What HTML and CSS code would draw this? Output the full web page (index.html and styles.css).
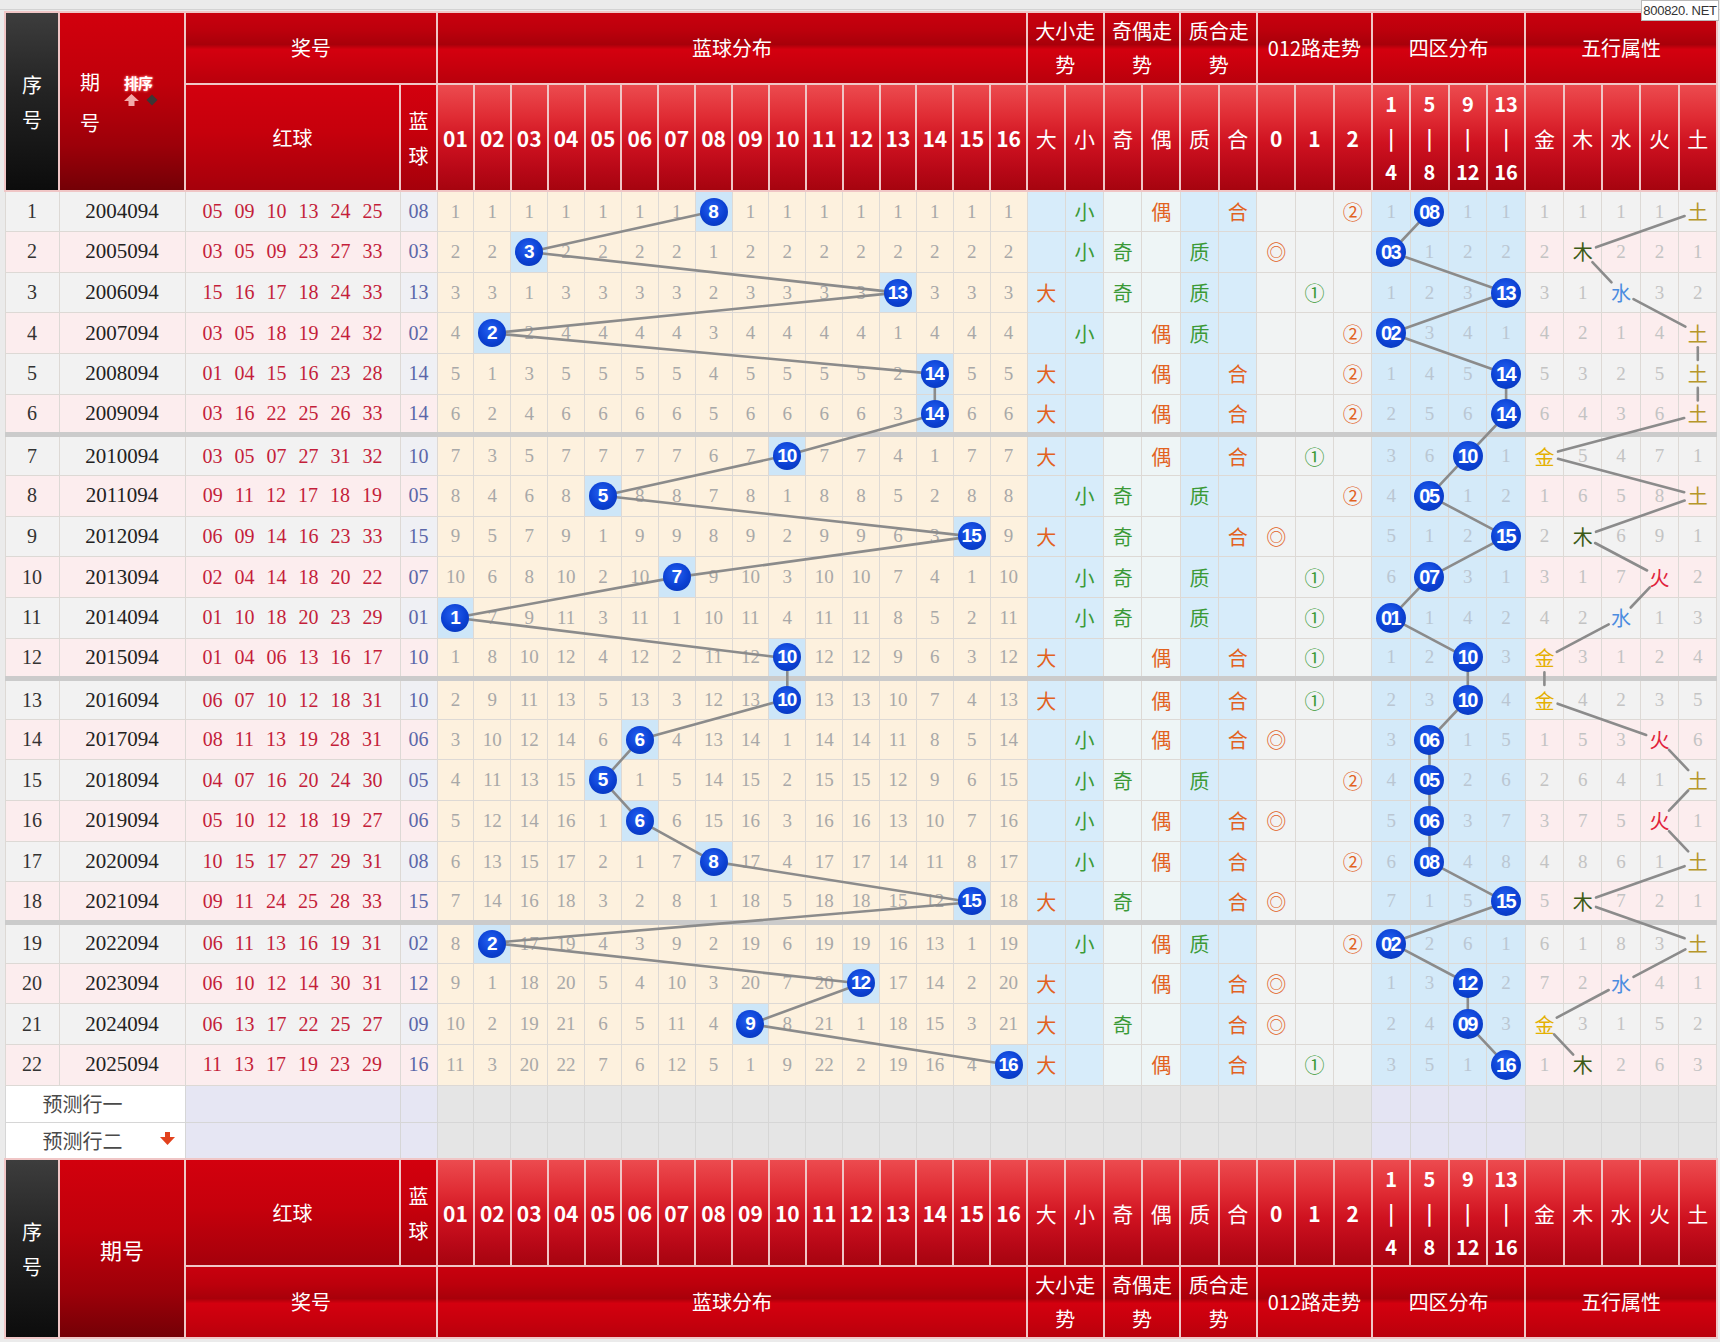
FILE: index.html
```html
<!DOCTYPE html>
<html lang="zh-CN">
<head>
<meta charset="utf-8">
<title>双色球蓝球走势图</title>
<link rel="stylesheet" href="styles.css">
</head>
<body>
<div class="site">800820. NET</div>
<div class="chart">
<svg class="lines" xmlns="http://www.w3.org/2000/svg"></svg>
<table class="grid">
<colgroup>
<col class="c-xh"><col class="c-qh"><col class="c-hq"><col class="c-lq">
<col class="c-n"><col class="c-n"><col class="c-n"><col class="c-n"><col class="c-n"><col class="c-n"><col class="c-n"><col class="c-n"><col class="c-n"><col class="c-n"><col class="c-n"><col class="c-n"><col class="c-n"><col class="c-n"><col class="c-n"><col class="c-n">
<col class="c-m"><col class="c-m"><col class="c-m"><col class="c-m"><col class="c-m"><col class="c-m"><col class="c-m"><col class="c-m"><col class="c-m"><col class="c-m"><col class="c-m"><col class="c-m"><col class="c-m"><col class="c-m"><col class="c-m"><col class="c-m"><col class="c-m"><col class="c-m">
</colgroup>
<thead>
<tr class="h1">
<th rowspan="2" class="xh"><span class="stk">序<br>号</span></th>
<th rowspan="2" class="qhh"><div class="qhw"><span class="stk wide">期<br>号</span><span class="sort"><b>排序</b><svg width="36" height="12" viewBox="0 0 36 12"><polygon points="7.5,0 15,7 10.5,7 10.5,12 4.5,12 4.5,7 0,7" fill="#f3a9a9"/><polygon points="28,0.5 33.5,6 28,11.5 22.5,6" fill="#3d3535"/></svg></span></div></th>
<th colspan="2" class="g1">奖号</th>
<th colspan="16" class="g1">蓝球分布</th>
<th colspan="2" class="g1 two">大小走势</th>
<th colspan="2" class="g1 two">奇偶走势</th>
<th colspan="2" class="g1 two">质合走势</th>
<th colspan="3" class="g1">012路走势</th>
<th colspan="4" class="g1">四区分布</th>
<th colspan="5" class="g1">五行属性</th>
</tr>
<tr class="h2">
<th class="rd">红球</th><th class="rd"><span class="stk">蓝<br>球</span></th>
<th class="nm">01</th><th class="nm">02</th><th class="nm">03</th><th class="nm">04</th><th class="nm">05</th><th class="nm">06</th><th class="nm">07</th><th class="nm">08</th><th class="nm">09</th><th class="nm">10</th><th class="nm">11</th><th class="nm">12</th><th class="nm">13</th><th class="nm">14</th><th class="nm">15</th><th class="nm">16</th>
<th class="nm cj">大</th><th class="nm cj">小</th><th class="nm cj">奇</th><th class="nm cj">偶</th><th class="nm cj">质</th><th class="nm cj">合</th>
<th class="nm">0</th><th class="nm">1</th><th class="nm">2</th>
<th class="nm zq">1<br>|<br>4</th><th class="nm zq">5<br>|<br>8</th><th class="nm zq">9<br>|<br>12</th><th class="nm zq">13<br>|<br>16</th>
<th class="nm cj">金</th><th class="nm cj">木</th><th class="nm cj">水</th><th class="nm cj">火</th><th class="nm cj">土</th>
</tr>
</thead>
<tbody>
<tr class="r a"><td>1</td><td>2004094</td><td>05 09 10 13 24 25</td><td>08</td><td>1</td><td>1</td><td>1</td><td>1</td><td>1</td><td>1</td><td>1</td><td class="on"><i class="ball bd">8</i></td><td>1</td><td>1</td><td>1</td><td>1</td><td>1</td><td>1</td><td>1</td><td>1</td><td></td><td><span class="g">小</span></td><td></td><td><span class="o">偶</span></td><td></td><td><span class="o">合</span></td><td></td><td></td><td><span class="o">②</span></td><td>1</td><td><i class="ball sq">08</i></td><td>1</td><td>1</td><td>1</td><td>1</td><td>1</td><td>1</td><td><span class="wx tu">土</span></td></tr>
<tr class="r b"><td>2</td><td>2005094</td><td>03 05 09 23 27 33</td><td>03</td><td>2</td><td>2</td><td class="on"><i class="ball bd">3</i></td><td>2</td><td>2</td><td>2</td><td>2</td><td>1</td><td>2</td><td>2</td><td>2</td><td>2</td><td>2</td><td>2</td><td>2</td><td>2</td><td></td><td><span class="g">小</span></td><td><span class="g">奇</span></td><td></td><td><span class="g">质</span></td><td></td><td><span class="o">◎</span></td><td></td><td></td><td><i class="ball sq">03</i></td><td>1</td><td>2</td><td>2</td><td>2</td><td><span class="wx mu">木</span></td><td>2</td><td>2</td><td>1</td></tr>
<tr class="r a"><td>3</td><td>2006094</td><td>15 16 17 18 24 33</td><td>13</td><td>3</td><td>3</td><td>1</td><td>3</td><td>3</td><td>3</td><td>3</td><td>2</td><td>3</td><td>3</td><td>3</td><td>3</td><td class="on"><i class="ball bd">13</i></td><td>3</td><td>3</td><td>3</td><td><span class="o">大</span></td><td></td><td><span class="g">奇</span></td><td></td><td><span class="g">质</span></td><td></td><td></td><td><span class="g">①</span></td><td></td><td>1</td><td>2</td><td>3</td><td><i class="ball sq">13</i></td><td>3</td><td>1</td><td><span class="wx shui">水</span></td><td>3</td><td>2</td></tr>
<tr class="r b"><td>4</td><td>2007094</td><td>03 05 18 19 24 32</td><td>02</td><td>4</td><td class="on"><i class="ball bd">2</i></td><td>2</td><td>4</td><td>4</td><td>4</td><td>4</td><td>3</td><td>4</td><td>4</td><td>4</td><td>4</td><td>1</td><td>4</td><td>4</td><td>4</td><td></td><td><span class="g">小</span></td><td></td><td><span class="o">偶</span></td><td><span class="g">质</span></td><td></td><td></td><td></td><td><span class="o">②</span></td><td><i class="ball sq">02</i></td><td>3</td><td>4</td><td>1</td><td>4</td><td>2</td><td>1</td><td>4</td><td><span class="wx tu">土</span></td></tr>
<tr class="r a"><td>5</td><td>2008094</td><td>01 04 15 16 23 28</td><td>14</td><td>5</td><td>1</td><td>3</td><td>5</td><td>5</td><td>5</td><td>5</td><td>4</td><td>5</td><td>5</td><td>5</td><td>5</td><td>2</td><td class="on"><i class="ball bd">14</i></td><td>5</td><td>5</td><td><span class="o">大</span></td><td></td><td></td><td><span class="o">偶</span></td><td></td><td><span class="o">合</span></td><td></td><td></td><td><span class="o">②</span></td><td>1</td><td>4</td><td>5</td><td><i class="ball sq">14</i></td><td>5</td><td>3</td><td>2</td><td>5</td><td><span class="wx tu">土</span></td></tr>
<tr class="r b"><td>6</td><td>2009094</td><td>03 16 22 25 26 33</td><td>14</td><td>6</td><td>2</td><td>4</td><td>6</td><td>6</td><td>6</td><td>6</td><td>5</td><td>6</td><td>6</td><td>6</td><td>6</td><td>3</td><td class="on"><i class="ball bd">14</i></td><td>6</td><td>6</td><td><span class="o">大</span></td><td></td><td></td><td><span class="o">偶</span></td><td></td><td><span class="o">合</span></td><td></td><td></td><td><span class="o">②</span></td><td>2</td><td>5</td><td>6</td><td><i class="ball sq">14</i></td><td>6</td><td>4</td><td>3</td><td>6</td><td><span class="wx tu">土</span></td></tr>
<tr class="r a gs"><td>7</td><td>2010094</td><td>03 05 07 27 31 32</td><td>10</td><td>7</td><td>3</td><td>5</td><td>7</td><td>7</td><td>7</td><td>7</td><td>6</td><td>7</td><td class="on"><i class="ball bd">10</i></td><td>7</td><td>7</td><td>4</td><td>1</td><td>7</td><td>7</td><td><span class="o">大</span></td><td></td><td></td><td><span class="o">偶</span></td><td></td><td><span class="o">合</span></td><td></td><td><span class="g">①</span></td><td></td><td>3</td><td>6</td><td><i class="ball sq">10</i></td><td>1</td><td><span class="wx jin">金</span></td><td>5</td><td>4</td><td>7</td><td>1</td></tr>
<tr class="r b"><td>8</td><td>2011094</td><td>09 11 12 17 18 19</td><td>05</td><td>8</td><td>4</td><td>6</td><td>8</td><td class="on"><i class="ball bd">5</i></td><td>8</td><td>8</td><td>7</td><td>8</td><td>1</td><td>8</td><td>8</td><td>5</td><td>2</td><td>8</td><td>8</td><td></td><td><span class="g">小</span></td><td><span class="g">奇</span></td><td></td><td><span class="g">质</span></td><td></td><td></td><td></td><td><span class="o">②</span></td><td>4</td><td><i class="ball sq">05</i></td><td>1</td><td>2</td><td>1</td><td>6</td><td>5</td><td>8</td><td><span class="wx tu">土</span></td></tr>
<tr class="r a"><td>9</td><td>2012094</td><td>06 09 14 16 23 33</td><td>15</td><td>9</td><td>5</td><td>7</td><td>9</td><td>1</td><td>9</td><td>9</td><td>8</td><td>9</td><td>2</td><td>9</td><td>9</td><td>6</td><td>3</td><td class="on"><i class="ball bd">15</i></td><td>9</td><td><span class="o">大</span></td><td></td><td><span class="g">奇</span></td><td></td><td></td><td><span class="o">合</span></td><td><span class="o">◎</span></td><td></td><td></td><td>5</td><td>1</td><td>2</td><td><i class="ball sq">15</i></td><td>2</td><td><span class="wx mu">木</span></td><td>6</td><td>9</td><td>1</td></tr>
<tr class="r b"><td>10</td><td>2013094</td><td>02 04 14 18 20 22</td><td>07</td><td>10</td><td>6</td><td>8</td><td>10</td><td>2</td><td>10</td><td class="on"><i class="ball bd">7</i></td><td>9</td><td>10</td><td>3</td><td>10</td><td>10</td><td>7</td><td>4</td><td>1</td><td>10</td><td></td><td><span class="g">小</span></td><td><span class="g">奇</span></td><td></td><td><span class="g">质</span></td><td></td><td></td><td><span class="g">①</span></td><td></td><td>6</td><td><i class="ball sq">07</i></td><td>3</td><td>1</td><td>3</td><td>1</td><td>7</td><td><span class="wx huo">火</span></td><td>2</td></tr>
<tr class="r a"><td>11</td><td>2014094</td><td>01 10 18 20 23 29</td><td>01</td><td class="on"><i class="ball bd">1</i></td><td>7</td><td>9</td><td>11</td><td>3</td><td>11</td><td>1</td><td>10</td><td>11</td><td>4</td><td>11</td><td>11</td><td>8</td><td>5</td><td>2</td><td>11</td><td></td><td><span class="g">小</span></td><td><span class="g">奇</span></td><td></td><td><span class="g">质</span></td><td></td><td></td><td><span class="g">①</span></td><td></td><td><i class="ball sq">01</i></td><td>1</td><td>4</td><td>2</td><td>4</td><td>2</td><td><span class="wx shui">水</span></td><td>1</td><td>3</td></tr>
<tr class="r b"><td>12</td><td>2015094</td><td>01 04 06 13 16 17</td><td>10</td><td>1</td><td>8</td><td>10</td><td>12</td><td>4</td><td>12</td><td>2</td><td>11</td><td>12</td><td class="on"><i class="ball bd">10</i></td><td>12</td><td>12</td><td>9</td><td>6</td><td>3</td><td>12</td><td><span class="o">大</span></td><td></td><td></td><td><span class="o">偶</span></td><td></td><td><span class="o">合</span></td><td></td><td><span class="g">①</span></td><td></td><td>1</td><td>2</td><td><i class="ball sq">10</i></td><td>3</td><td><span class="wx jin">金</span></td><td>3</td><td>1</td><td>2</td><td>4</td></tr>
<tr class="r a gs"><td>13</td><td>2016094</td><td>06 07 10 12 18 31</td><td>10</td><td>2</td><td>9</td><td>11</td><td>13</td><td>5</td><td>13</td><td>3</td><td>12</td><td>13</td><td class="on"><i class="ball bd">10</i></td><td>13</td><td>13</td><td>10</td><td>7</td><td>4</td><td>13</td><td><span class="o">大</span></td><td></td><td></td><td><span class="o">偶</span></td><td></td><td><span class="o">合</span></td><td></td><td><span class="g">①</span></td><td></td><td>2</td><td>3</td><td><i class="ball sq">10</i></td><td>4</td><td><span class="wx jin">金</span></td><td>4</td><td>2</td><td>3</td><td>5</td></tr>
<tr class="r b"><td>14</td><td>2017094</td><td>08 11 13 19 28 31</td><td>06</td><td>3</td><td>10</td><td>12</td><td>14</td><td>6</td><td class="on"><i class="ball bd">6</i></td><td>4</td><td>13</td><td>14</td><td>1</td><td>14</td><td>14</td><td>11</td><td>8</td><td>5</td><td>14</td><td></td><td><span class="g">小</span></td><td></td><td><span class="o">偶</span></td><td></td><td><span class="o">合</span></td><td><span class="o">◎</span></td><td></td><td></td><td>3</td><td><i class="ball sq">06</i></td><td>1</td><td>5</td><td>1</td><td>5</td><td>3</td><td><span class="wx huo">火</span></td><td>6</td></tr>
<tr class="r a"><td>15</td><td>2018094</td><td>04 07 16 20 24 30</td><td>05</td><td>4</td><td>11</td><td>13</td><td>15</td><td class="on"><i class="ball bd">5</i></td><td>1</td><td>5</td><td>14</td><td>15</td><td>2</td><td>15</td><td>15</td><td>12</td><td>9</td><td>6</td><td>15</td><td></td><td><span class="g">小</span></td><td><span class="g">奇</span></td><td></td><td><span class="g">质</span></td><td></td><td></td><td></td><td><span class="o">②</span></td><td>4</td><td><i class="ball sq">05</i></td><td>2</td><td>6</td><td>2</td><td>6</td><td>4</td><td>1</td><td><span class="wx tu">土</span></td></tr>
<tr class="r b"><td>16</td><td>2019094</td><td>05 10 12 18 19 27</td><td>06</td><td>5</td><td>12</td><td>14</td><td>16</td><td>1</td><td class="on"><i class="ball bd">6</i></td><td>6</td><td>15</td><td>16</td><td>3</td><td>16</td><td>16</td><td>13</td><td>10</td><td>7</td><td>16</td><td></td><td><span class="g">小</span></td><td></td><td><span class="o">偶</span></td><td></td><td><span class="o">合</span></td><td><span class="o">◎</span></td><td></td><td></td><td>5</td><td><i class="ball sq">06</i></td><td>3</td><td>7</td><td>3</td><td>7</td><td>5</td><td><span class="wx huo">火</span></td><td>1</td></tr>
<tr class="r a"><td>17</td><td>2020094</td><td>10 15 17 27 29 31</td><td>08</td><td>6</td><td>13</td><td>15</td><td>17</td><td>2</td><td>1</td><td>7</td><td class="on"><i class="ball bd">8</i></td><td>17</td><td>4</td><td>17</td><td>17</td><td>14</td><td>11</td><td>8</td><td>17</td><td></td><td><span class="g">小</span></td><td></td><td><span class="o">偶</span></td><td></td><td><span class="o">合</span></td><td></td><td></td><td><span class="o">②</span></td><td>6</td><td><i class="ball sq">08</i></td><td>4</td><td>8</td><td>4</td><td>8</td><td>6</td><td>1</td><td><span class="wx tu">土</span></td></tr>
<tr class="r b"><td>18</td><td>2021094</td><td>09 11 24 25 28 33</td><td>15</td><td>7</td><td>14</td><td>16</td><td>18</td><td>3</td><td>2</td><td>8</td><td>1</td><td>18</td><td>5</td><td>18</td><td>18</td><td>15</td><td>12</td><td class="on"><i class="ball bd">15</i></td><td>18</td><td><span class="o">大</span></td><td></td><td><span class="g">奇</span></td><td></td><td></td><td><span class="o">合</span></td><td><span class="o">◎</span></td><td></td><td></td><td>7</td><td>1</td><td>5</td><td><i class="ball sq">15</i></td><td>5</td><td><span class="wx mu">木</span></td><td>7</td><td>2</td><td>1</td></tr>
<tr class="r a gs"><td>19</td><td>2022094</td><td>06 11 13 16 19 31</td><td>02</td><td>8</td><td class="on"><i class="ball bd">2</i></td><td>17</td><td>19</td><td>4</td><td>3</td><td>9</td><td>2</td><td>19</td><td>6</td><td>19</td><td>19</td><td>16</td><td>13</td><td>1</td><td>19</td><td></td><td><span class="g">小</span></td><td></td><td><span class="o">偶</span></td><td><span class="g">质</span></td><td></td><td></td><td></td><td><span class="o">②</span></td><td><i class="ball sq">02</i></td><td>2</td><td>6</td><td>1</td><td>6</td><td>1</td><td>8</td><td>3</td><td><span class="wx tu">土</span></td></tr>
<tr class="r b"><td>20</td><td>2023094</td><td>06 10 12 14 30 31</td><td>12</td><td>9</td><td>1</td><td>18</td><td>20</td><td>5</td><td>4</td><td>10</td><td>3</td><td>20</td><td>7</td><td>20</td><td class="on"><i class="ball bd">12</i></td><td>17</td><td>14</td><td>2</td><td>20</td><td><span class="o">大</span></td><td></td><td></td><td><span class="o">偶</span></td><td></td><td><span class="o">合</span></td><td><span class="o">◎</span></td><td></td><td></td><td>1</td><td>3</td><td><i class="ball sq">12</i></td><td>2</td><td>7</td><td>2</td><td><span class="wx shui">水</span></td><td>4</td><td>1</td></tr>
<tr class="r a"><td>21</td><td>2024094</td><td>06 13 17 22 25 27</td><td>09</td><td>10</td><td>2</td><td>19</td><td>21</td><td>6</td><td>5</td><td>11</td><td>4</td><td class="on"><i class="ball bd">9</i></td><td>8</td><td>21</td><td>1</td><td>18</td><td>15</td><td>3</td><td>21</td><td><span class="o">大</span></td><td></td><td><span class="g">奇</span></td><td></td><td></td><td><span class="o">合</span></td><td><span class="o">◎</span></td><td></td><td></td><td>2</td><td>4</td><td><i class="ball sq">09</i></td><td>3</td><td><span class="wx jin">金</span></td><td>3</td><td>1</td><td>5</td><td>2</td></tr>
<tr class="r b"><td>22</td><td>2025094</td><td>11 13 17 19 23 29</td><td>16</td><td>11</td><td>3</td><td>20</td><td>22</td><td>7</td><td>6</td><td>12</td><td>5</td><td>1</td><td>9</td><td>22</td><td>2</td><td>19</td><td>16</td><td>4</td><td class="on"><i class="ball bd">16</i></td><td><span class="o">大</span></td><td></td><td></td><td><span class="o">偶</span></td><td></td><td><span class="o">合</span></td><td></td><td><span class="g">①</span></td><td></td><td>3</td><td>5</td><td>1</td><td><i class="ball sq">16</i></td><td>1</td><td><span class="wx mu">木</span></td><td>2</td><td>6</td><td>3</td></tr>
<tr class="p"><td colspan="2" class="pl"><div class="plw"><span>预测行一</span></div></td><td></td><td></td><td></td><td></td><td></td><td></td><td></td><td></td><td></td><td></td><td></td><td></td><td></td><td></td><td></td><td></td><td></td><td></td><td></td><td></td><td></td><td></td><td></td><td></td><td></td><td></td><td></td><td></td><td></td><td></td><td></td><td></td><td></td><td></td><td></td><td></td></tr>
<tr class="p"><td colspan="2" class="pl"><div class="plw"><span>预测行二</span><svg class="darr" width="15" height="13" viewBox="0 0 15 13"><polygon points="5,0 10,0 10,5 15,5 7.5,13 0,5 5,5" fill="#e2411d"/></svg></div></td><td></td><td></td><td></td><td></td><td></td><td></td><td></td><td></td><td></td><td></td><td></td><td></td><td></td><td></td><td></td><td></td><td></td><td></td><td></td><td></td><td></td><td></td><td></td><td></td><td></td><td></td><td></td><td></td><td></td><td></td><td></td><td></td><td></td><td></td><td></td><td></td></tr>
</tbody>
<tfoot>
<tr class="f1">
<th rowspan="2" class="xh"><span class="stk">序<br>号</span></th>
<th rowspan="2" class="qhh qhf">期号</th>
<th class="rd">红球</th><th class="rd"><span class="stk">蓝<br>球</span></th>
<th class="nm">01</th><th class="nm">02</th><th class="nm">03</th><th class="nm">04</th><th class="nm">05</th><th class="nm">06</th><th class="nm">07</th><th class="nm">08</th><th class="nm">09</th><th class="nm">10</th><th class="nm">11</th><th class="nm">12</th><th class="nm">13</th><th class="nm">14</th><th class="nm">15</th><th class="nm">16</th>
<th class="nm cj">大</th><th class="nm cj">小</th><th class="nm cj">奇</th><th class="nm cj">偶</th><th class="nm cj">质</th><th class="nm cj">合</th>
<th class="nm">0</th><th class="nm">1</th><th class="nm">2</th>
<th class="nm zq">1<br>|<br>4</th><th class="nm zq">5<br>|<br>8</th><th class="nm zq">9<br>|<br>12</th><th class="nm zq">13<br>|<br>16</th>
<th class="nm cj">金</th><th class="nm cj">木</th><th class="nm cj">水</th><th class="nm cj">火</th><th class="nm cj">土</th>
</tr>
<tr class="f2">
<th colspan="2" class="g1">奖号</th>
<th colspan="16" class="g1">蓝球分布</th>
<th colspan="2" class="g1 two">大小走势</th>
<th colspan="2" class="g1 two">奇偶走势</th>
<th colspan="2" class="g1 two">质合走势</th>
<th colspan="3" class="g1">012路走势</th>
<th colspan="4" class="g1">四区分布</th>
<th colspan="5" class="g1">五行属性</th>
</tr>
</tfoot>
</table>
</div>
<script src="script.js"></script>
</body>
</html>
```

FILE: styles.css
```css
* { box-sizing: border-box; }
html, body { margin: 0; padding: 0; }
body {
  width: 1720px;
  height: 1342px;
  overflow: hidden;
  background: #ebebeb;
  position: relative;
  font-family: "Liberation Serif", "Noto Sans CJK SC", serif;
}
.site {
  position: absolute;
  top: 0;
  right: 1px;
  z-index: 5;
  width: 78px;
  height: 21px;
  background: #fff;
  border: 1px solid #b9b9b9;
  color: #333;
  font: 13px/19px "Liberation Sans", "DejaVu Sans", sans-serif;
  letter-spacing: -0.3px;
  white-space: nowrap;
  text-align: center;
}
.chart {
  position: relative;
  margin: 11px 0 0 4px;
  width: 1712px;
}
.chart::before {
  content: "";
  position: absolute;
  left: -4px;
  right: -4px;
  top: -2px;
  height: 1px;
  background: #d3d3d3;
}
.lines {
  position: absolute;
  left: 0;
  top: 0;
  z-index: 1;
  pointer-events: none;
}
.lines line { stroke: #8b8b8b; stroke-width: 2.6; stroke-linecap: round; }

.grid {
  table-layout: fixed;
  width: 1712px;
  border-collapse: collapse;
}
.c-xh { width: 54px; }
.c-qh { width: 126px; }
.c-hq { width: 215px; }
.c-lq { width: 37px; }
.c-n { width: 36.875px; }
.c-m { width: 38.333px; }

/* header cells */
.grid th {
  padding: 0;
  border: 2px solid #f0c6c6;
  color: #fff;
  font-family: "Noto Sans CJK SC", sans-serif;
  font-weight: normal;
  font-size: 20px;
  text-align: center;
  vertical-align: middle;
  line-height: 34px;
}
.h1 th, .f2 th { height: 72px; }
.h2 th, .f1 th { height: 107px; }
.xh { background: linear-gradient(#3d3d3d, #232323 45%, #0c0c0c); border-left: 0; }
.qhh { background: linear-gradient(#d2000d, #c0000b 40%, #9c0009 75%, #740006); }
.g1 { background: linear-gradient(#c9000e 0%, #bc000c 25%, #a8000a 45%, #d4000f 52%, #c8000d 75%, #b9000c 100%); }
.rd { background: linear-gradient(#d3000e, #c6000c 45%, #a5000b 100%); }
.nm {
  background: linear-gradient(#ec4b4f 0%, #e02c34 30%, #cf1220 55%, #b80817 80%, #a6040f 100%);
  font-family: "Liberation Sans", sans-serif;
  font-weight: bold !important;
  font-size: 21px !important;
}
.nm.cj { font-family: "Noto Sans CJK SC", sans-serif; font-weight: normal !important; }
.nm.zq { line-height: 34px; font-size: 20px !important; }
.two { line-height: 34px; }
.stk { display: inline-block; line-height: 35px; }
.stk.wide { line-height: 41px; }
.qhw {
  display: flex;
  align-items: center;
  justify-content: center;
  gap: 24px;
  padding-right: 4px;
}
.sort {
  display: flex;
  flex-direction: column;
  align-items: flex-start;
  gap: 3px;
  margin-top: -22px;
}
.sort b {
  font-size: 15px;
  line-height: 16px;
  font-weight: bold;
  color: #fff;
  text-shadow: 0 0 3px #ff6a6a, 0 0 2px #ff9a9a;
  letter-spacing: -1px;
}
.sort svg { display: block; }
.qhf { font-size: 22px !important; }

/* data rows */
.r td {
  height: 40.65px;
  padding: 0;
  border: 1px solid #ddd9d5;
  text-align: center;
  vertical-align: middle;
  font-size: 19px;
  color: #a8a8a8;
  background: #fdf1de;
  white-space: nowrap;
}
.r.gs td { border-top: 5px solid #cbcbcb; }
.r.a td:nth-child(-n+4), .r.a td:nth-child(n+34) { background: #f2f2f2; }
.r.b td:nth-child(-n+4), .r.b td:nth-child(n+34) { background: #fcedee; }
.r.a td:nth-child(4) { background: #eff0f4; }
.r td:nth-child(1) { color: #333; font-size: 20px; }
.r td:nth-child(2) { color: #222; font-size: 21px; }
.r td:nth-child(3) { color: #c41e3a; font-size: 20px; word-spacing: 7px; }
.r td:nth-child(4) { color: #5b67a9; font-size: 20px; }
.r td:nth-child(21), .r td:nth-child(22), .r td:nth-child(25), .r td:nth-child(26) { background: #d7ecfa; }
.r td:nth-child(23), .r td:nth-child(24) { background: #eef5f6; }
.r td:nth-child(n+27):nth-child(-n+29) { background: #f1f3f3; }
.r td:nth-child(n+30):nth-child(-n+33) { background: #d4eaf9; color: #bac6d2; }
.r td:nth-child(n+34) { color: #c3c3c3; }
.r td.on { background: #cde6f8; }

.o, .g, .wx {
  font-family: "Noto Sans CJK SC", sans-serif;
  font-size: 20px;
}
.o { color: #e2621f; }
.g { color: #3b9a37; }
.jin { color: #e4b000; }
.mu { color: #3d5b17; }
.shui { color: #4b8ce0; }
.huo { color: #e1233b; }
.tu { color: #b6972a; }

.ball {
  position: relative;
  z-index: 2;
  display: inline-block;
  width: 28px;
  height: 28px;
  border-radius: 50%;
  background: radial-gradient(circle at 45% 38%, #2461f2 0%, #0b40d2 55%, #0734b0 100%);
  color: #fff;
  font: bold 19px/28px "Liberation Sans", sans-serif;
  font-style: normal;
  letter-spacing: -1px;
  text-indent: -1px;
  vertical-align: middle;
}
.ball.sq {
  width: 30px;
  height: 30px;
  font-size: 20px;
  line-height: 30px;
  letter-spacing: -1.5px;
}

/* prediction rows */
.p td {
  height: 37px;
  padding: 0;
  border: 1px solid #d6d6d6;
  background: #e5e5e5;
}
.p td:nth-child(2), .p td:nth-child(3) { background: #e6e6f3; }
.p td:nth-child(n+29):nth-child(-n+32) { background: #e4e4f3; }
.p td.pl { background: #fff; }
.plw {
  display: flex;
  align-items: center;
  gap: 37px;
  padding-left: 37px;
  font-family: "Noto Sans CJK SC", sans-serif;
  font-size: 20px;
  color: #4a4a4a;
}
.darr { display: block; margin-top: -4px; }
```

FILE: script.js
```js
(function () {
  function draw() {
    var chart = document.querySelector('.chart');
    var svg = chart.querySelector('.lines');
    var box = chart.getBoundingClientRect();
    svg.setAttribute('width', box.width);
    svg.setAttribute('height', box.height);
    svg.setAttribute('viewBox', '0 0 ' + box.width + ' ' + box.height);
    while (svg.firstChild) svg.removeChild(svg.firstChild);
    var sets = [['.bd', 0], ['.sq', 0], ['.wx', 14]];
    sets.forEach(function (s) {
      var els = chart.querySelectorAll(s[0]);
      var prev = null;
      Array.prototype.forEach.call(els, function (el) {
        var cell = el.closest('td') || el;
        var r = cell.getBoundingClientRect();
        var p = { x: r.left + r.width / 2 - box.left, y: r.top + r.height / 2 - box.top };
        if (prev) {
          var dx = p.x - prev.x, dy = p.y - prev.y;
          var d = Math.sqrt(dx * dx + dy * dy) || 1;
          var t = s[1] / d;
          var ln = document.createElementNS('http://www.w3.org/2000/svg', 'line');
          ln.setAttribute('x1', (prev.x + dx * t).toFixed(1));
          ln.setAttribute('y1', (prev.y + dy * t).toFixed(1));
          ln.setAttribute('x2', (p.x - dx * t).toFixed(1));
          ln.setAttribute('y2', (p.y - dy * t).toFixed(1));
          svg.appendChild(ln);
        }
        prev = p;
      });
    });
  }
  draw();
  window.addEventListener('load', draw);
  if (document.fonts && document.fonts.ready) document.fonts.ready.then(draw);
})();
```
